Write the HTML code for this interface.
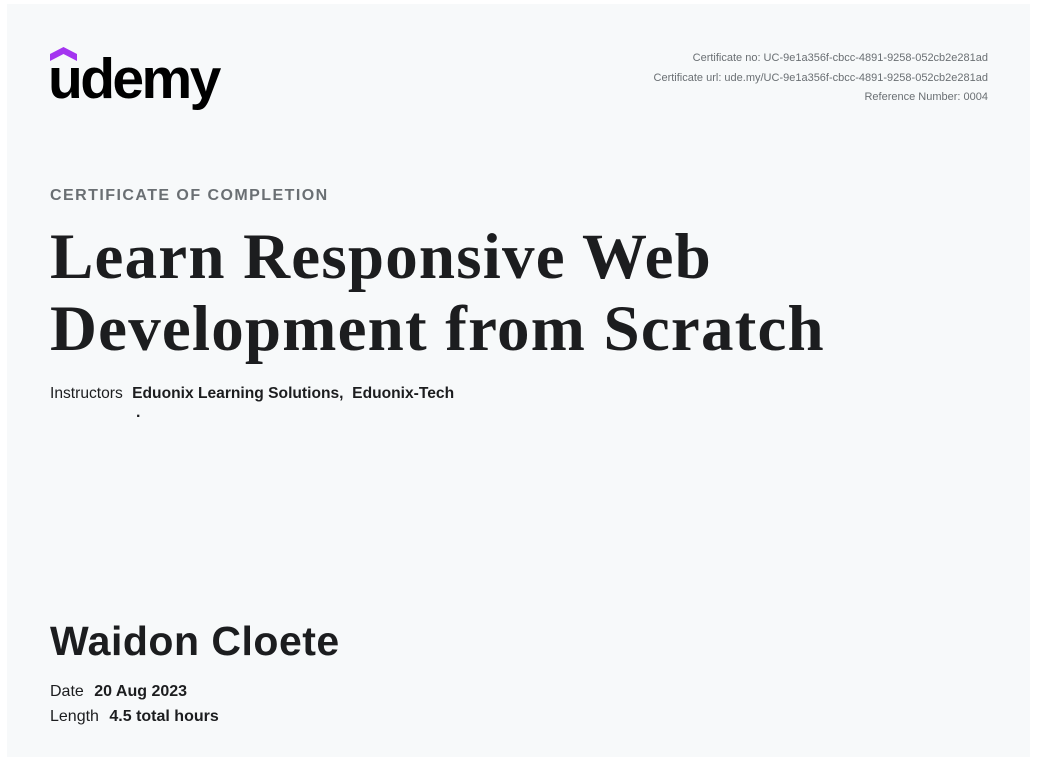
<!DOCTYPE html>
<html><head><style>
body{margin:0;width:1044px;height:765px;background:#fff;position:relative;font-family:"Liberation Sans",sans-serif;color:#1c1d1f;overflow:hidden}
.card{position:absolute;left:7px;top:4px;width:1023px;height:753px;background:#f7f9fa}
.a{position:absolute;white-space:nowrap}
.meta{right:56px;top:49px;text-align:right;font-size:11px;color:#6a6f73;line-height:19.5px;position:absolute}
</style></head><body>
<div class="card"></div>
<svg class="a" style="left:50px;top:47px" width="28" height="16" viewBox="0 0 28 16"><path d="M0 7 L13.5 0 L27 7 L27 14 L13.5 7 L0 14Z" fill="#a435f0"/></svg>
<div class="a" style="left:48px;top:46px;font-size:57px;font-weight:bold;letter-spacing:-2.6px;color:#000">udemy</div>
<div class="meta">Certificate no: UC-9e1a356f-cbcc-4891-9258-052cb2e281ad<br>Certificate url: ude.my/UC-9e1a356f-cbcc-4891-9258-052cb2e281ad<br>Reference Number: 0004</div>
<div class="a" style="left:50px;top:187px;font-size:16px;font-weight:bold;letter-spacing:1.45px;color:#6a6f73">CERTIFICATE OF COMPLETION</div>
<div class="a" style="left:50px;top:221px;font-family:'Liberation Serif',serif;font-weight:bold;font-size:65px;line-height:72px;letter-spacing:1.2px">Learn Responsive Web<br>Development from Scratch</div>
<div class="a" style="left:50px;top:385px;font-size:15.6px">Instructors <b style="margin-left:5px">Eduonix Learning Solutions,&nbsp; Eduonix-Tech</b></div>
<div class="a" style="left:136px;top:404px;font-size:16px;font-weight:bold">.</div>
<div class="a" style="left:50px;top:618px;font-size:41px;font-weight:bold;letter-spacing:0.5px">Waidon Cloete</div>
<div class="a" style="left:50px;top:683px;font-size:16px">Date <b style="margin-left:6px">20 Aug 2023</b></div>
<div class="a" style="left:50px;top:708px;font-size:16px">Length <b style="margin-left:6px">4.5 total hours</b></div>
</body></html>
